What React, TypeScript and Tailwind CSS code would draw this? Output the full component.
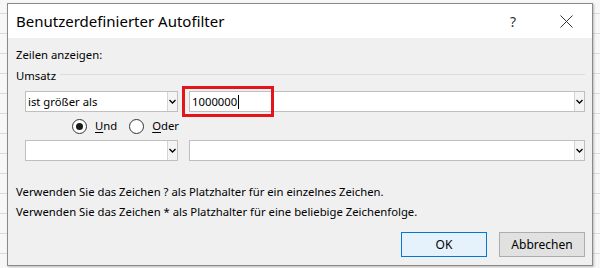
import React from "react";

function Chevron() {
  return (
    <svg width="7" height="5" viewBox="0 0 7 5" className="block">
      <path d="M0.5 1 L3.5 4 L6.5 1" fill="none" stroke="#000" strokeWidth="1.3" />
    </svg>
  );
}

function Combo({ value, width }: { value?: string; width?: string }) {
  return (
    <div
      className={`flex h-[21px] border border-[#bfbfbf] bg-white ${width ?? "flex-1"}`}
    >
      <div className="flex-1 pl-[2px] leading-[19px] text-black whitespace-nowrap overflow-hidden">
        {value}
      </div>
      <div className="flex w-[10px] items-center justify-center border-l border-[#d4d4d4] bg-[#f4f4f4]">
        <Chevron />
      </div>
    </div>
  );
}

function Radio({ checked, label, hot }: { checked?: boolean; label: string; hot: string }) {
  return (
    <div className="flex items-center">
      <div className="flex h-[15px] w-[15px] items-center justify-center rounded-full border border-[#333] bg-white">
        {checked && <div className="h-[7px] w-[7px] rounded-full bg-[#1a1a1a]" />}
      </div>
      <span className="ml-[8px] leading-[16px] text-black">
        <span className="underline underline-offset-2">{hot}</span>
        {label.slice(hot.length)}
      </span>
    </div>
  );
}

export default function App() {
  return (
    <div className="relative h-[268px] w-[600px] overflow-hidden bg-[#f7f7f7] font-['Segoe_UI','Noto_Sans',sans-serif] [background-image:linear-gradient(#dcdcdc_1px,transparent_1px)] [background-size:100%_20px] [background-position:0_13px]">
      <div className="absolute left-[7px] top-[3px] flex h-[263px] w-[586px] flex-col border border-[#8a8a8a] bg-[#f0f0f0] shadow-[1px_1px_2px_rgba(0,0,0,0.25)]">
        <div className="flex h-[34px] items-center bg-white pl-[8px] pr-[19px]">
          <span className="flex-1 text-[15px] text-black">Benutzerdefinierter Autofilter</span>
          <span className="mr-[44px] text-[14px] text-[#333]">?</span>
          <svg width="13" height="13" viewBox="0 0 13 13">
            <path d="M0.5 0.5 L12.5 12.5 M12.5 0.5 L0.5 12.5" stroke="#333" strokeWidth="1" />
          </svg>
        </div>

        <div className="flex flex-1 flex-col pl-[8px] pr-[7px] text-[11.3px] text-black">
          <div className="mt-[9px] h-[16px] leading-[16px]">Zeilen anzeigen:</div>
          <div className="mt-[5px] flex h-[16px] items-center">
            <span className="leading-[16px]">Umsatz</span>
            <div className="ml-[4px] mb-[3px] h-px flex-1 bg-[#dcdcdc]" />
          </div>

          <div className="mt-[7px] flex h-[21px] pl-[9px]">
            <Combo value="ist größer als" width="w-[153px]" />
            <div className="relative ml-[11px] flex flex-1">
              <div className="flex h-[21px] flex-1 border border-[#bfbfbf] bg-white">
                <div className="flex flex-1 items-center pl-[2px] leading-[19px]">
                  <span>1000000</span>
                  <span className="ml-[1px] h-[14px] w-px bg-black" />
                </div>
                <div className="flex w-[10px] items-center justify-center border-l border-[#d4d4d4] bg-[#f4f4f4]">
                  <Chevron />
                </div>
              </div>
              <div className="absolute -left-[7px] -top-[5px] h-[31px] w-[92px] border-[3px] border-[#e3141c]" />
            </div>
          </div>

          <div className="mt-[6px] flex h-[16px] items-center pl-[56px]">
            <Radio checked label="Und" hot="U" />
            <div className="ml-[12px]">
              <Radio label="Oder" hot="O" />
            </div>
          </div>

          <div className="mt-[6px] flex h-[21px] pl-[9px]">
            <Combo width="w-[153px]" />
            <div className="ml-[11px] flex flex-1">
              <Combo />
            </div>
          </div>

          <div className="mt-[23px] h-[16px] leading-[16px] whitespace-nowrap">
            Verwenden Sie das Zeichen ? als Platzhalter für ein einzelnes Zeichen.
          </div>
          <div className="mt-[4px] h-[16px] leading-[16px] whitespace-nowrap">
            Verwenden Sie das Zeichen * als Platzhalter für eine beliebige Zeichenfolge.
          </div>

          <div className="mt-[12px] flex justify-end gap-[12px]">
            <button className="h-[25px] w-[86px] border border-[#0078d7] bg-[#e5f1fb] text-[12px] text-black">
              OK
            </button>
            <button className="h-[25px] w-[86px] border border-[#adadad] bg-[#e1e1e1] text-[12px] text-black">
              Abbrechen
            </button>
          </div>
        </div>
      </div>
    </div>
  );
}
